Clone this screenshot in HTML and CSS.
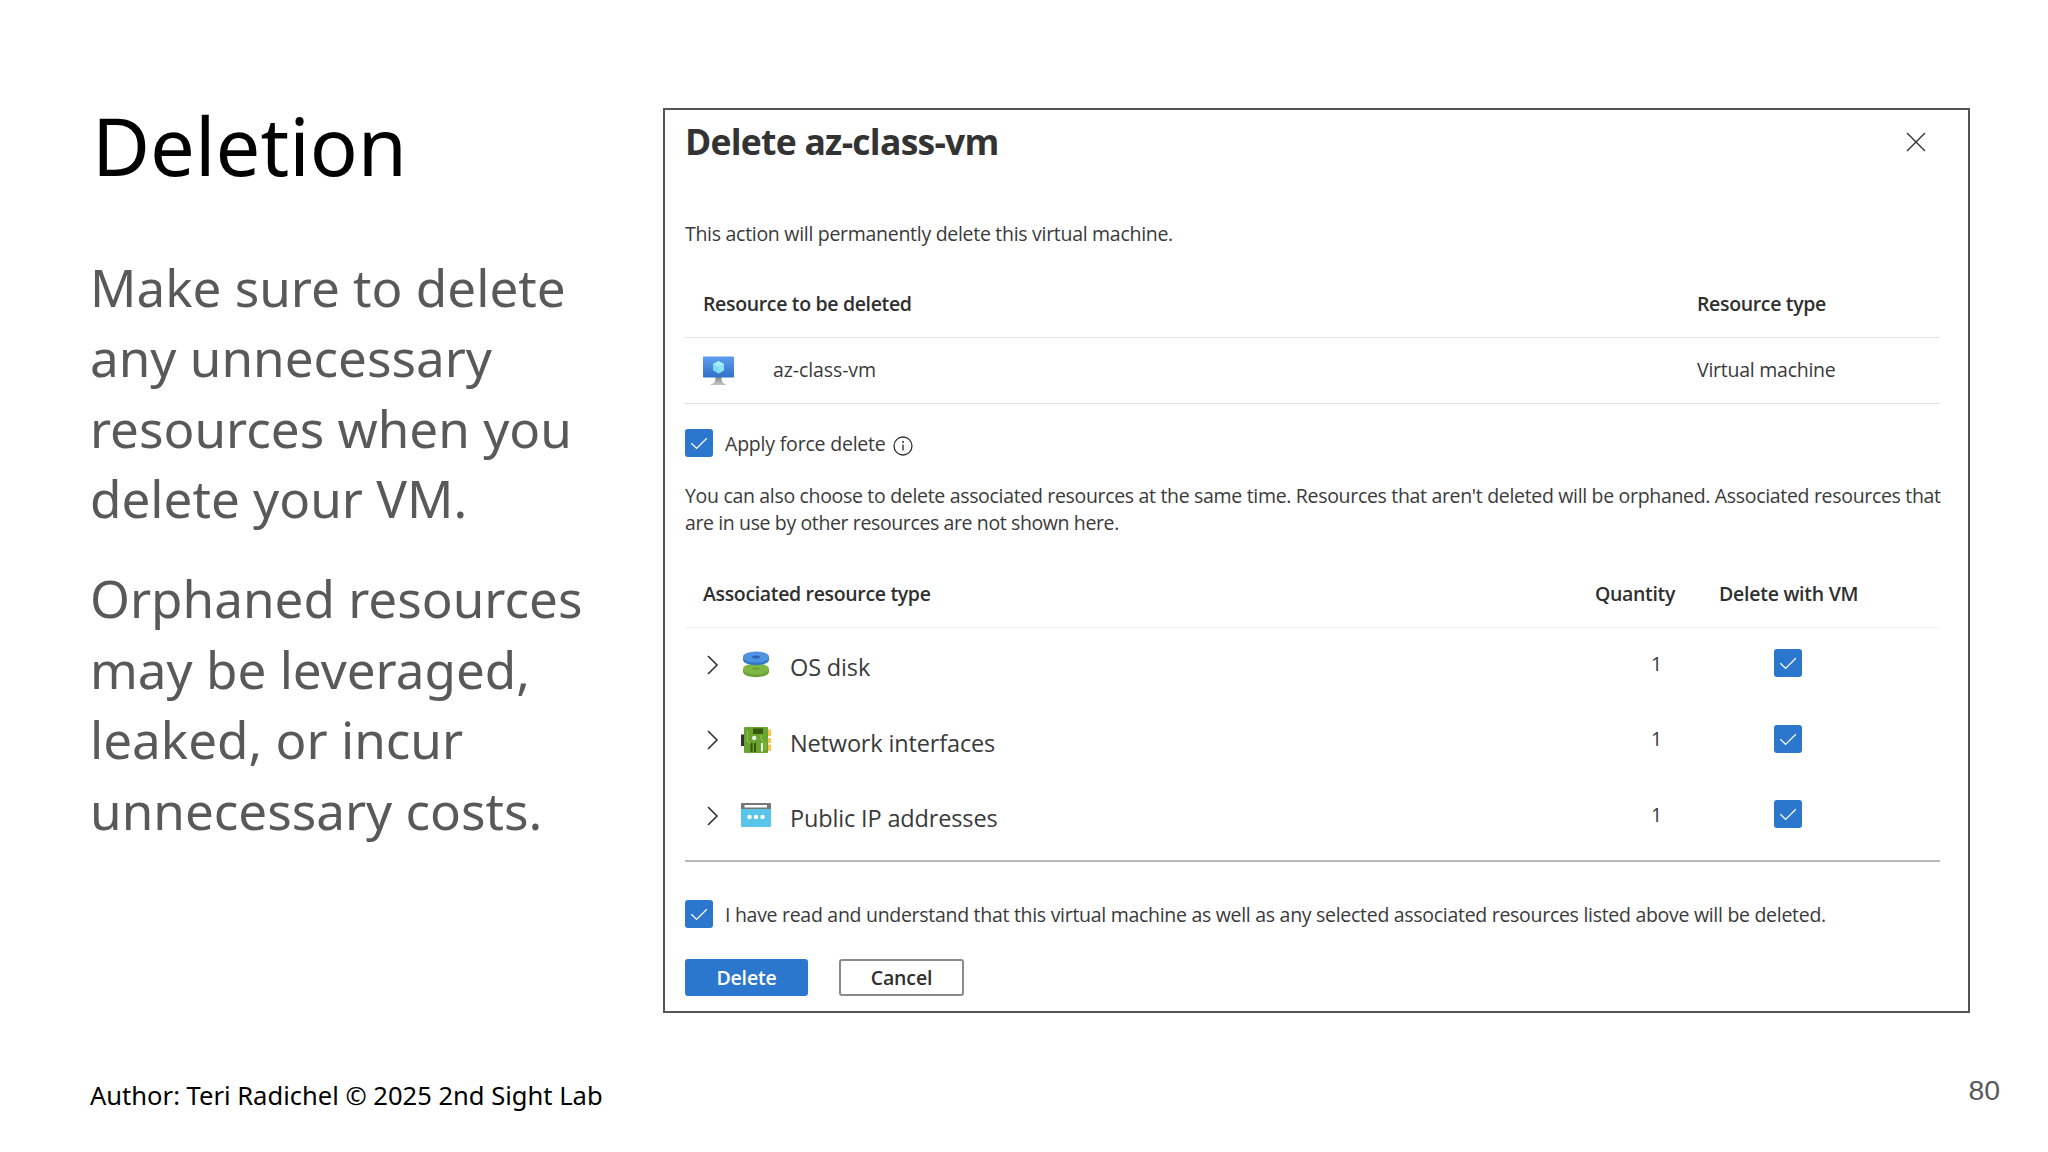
FILE: index.html
```html
<!DOCTYPE html>
<html lang="en">
<head>
  <meta charset="UTF-8">
  <title>Deletion</title>
  <link rel="stylesheet" href="styles.css">
</head>
<body>

  <!-- shared checkmark -->
  <svg class="defs" width="0" height="0">
    <symbol id="check" viewBox="0 0 28 28">
      <path d="M6.3 14.2 L11.6 19.4 L21.8 9.2" fill="none" stroke="#fff" stroke-width="1.3"/>
    </symbol>
    <symbol id="chevron" viewBox="0 0 12 20">
      <path d="M1 1 L10 10 L1 19" fill="none" stroke="#333" stroke-width="1.6"/>
    </symbol>
  </svg>

  <main class="slide">
    <section class="notes">
      <h1>Deletion</h1>
      <p>Make sure to delete<br>any unnecessary<br>resources when you<br>delete your VM.</p>
      <p>Orphaned resources<br>may be leveraged,<br>leaked, or incur<br>unnecessary costs.</p>
    </section>

    <section class="panel">
      <header class="panel-header">
        <h2>Delete az-class-vm</h2>
        <svg class="close" width="20" height="20" viewBox="0 0 20 20">
          <path d="M1 1 L19 19 M19 1 L1 19" fill="none" stroke="#333" stroke-width="1.4"/>
        </svg>
      </header>

      <p class="intro">This action will permanently delete this virtual machine.</p>

      <div class="resources">
        <div class="row head">
          <span class="resource">Resource to be deleted</span>
          <span class="type">Resource type</span>
        </div>
        <div class="row item">
          <span class="resource">
            <svg width="32" height="30" viewBox="0 0 32 30">
              <defs>
                <linearGradient id="screen" x1="0" y1="0" x2="0" y2="1">
                  <stop offset="0" stop-color="#5e9cf0"/>
                  <stop offset="1" stop-color="#2f72c9"/>
                </linearGradient>
                <linearGradient id="stand" x1="0" y1="0" x2="0" y2="1">
                  <stop offset="0" stop-color="#8a8a8a"/>
                  <stop offset="1" stop-color="#c4c4c4"/>
                </linearGradient>
              </defs>
              <path d="M12.5 21 H18.5 C18.5 26 20 28 23 28 V29 H8 V28 C11 28 12.5 26 12.5 21 Z" fill="url(#stand)"/>
              <rect x="0" y="0.5" width="31" height="21" rx="0.8" fill="url(#screen)"/>
              <path d="M15.5 5 L21 8 V14.2 L15.5 17.4 L10 14.2 V8 Z" fill="#7fdcf5"/>
              <path d="M15.5 5 L21 8 L15.5 11.1 L10 8 Z" fill="#a5ecfa"/>
              <path d="M15.5 11.1 L21 8 V14.2 L15.5 17.4 Z" fill="#8ee3f7"/>
            </svg>
            <span class="vm-name">az-class-vm</span>
          </span>
          <span class="type">Virtual machine</span>
        </div>
      </div>

      <div class="option force">
        <span class="checkbox"><svg><use href="#check"/></svg></span>
        <span>Apply force delete</span>
        <svg class="info" width="20" height="20" viewBox="0 0 20 20">
          <circle cx="10" cy="10" r="9" fill="none" stroke="#333" stroke-width="1.3"/>
          <path d="M10 8.6 V14.6" stroke="#333" stroke-width="1.4"/>
          <circle cx="10" cy="6" r="1" fill="#333"/>
        </svg>
      </div>

      <p class="also">You can also choose to delete associated resources at the same time. Resources that aren't deleted will be orphaned. Associated resources that<br><span class="tight">are in use by other resources are not shown here.</span></p>

      <div class="associated">
        <div class="assoc-row assoc-head">
          <span class="name">Associated resource type</span>
          <span class="qty">Quantity</span>
          <span class="with-vm">Delete with VM</span>
        </div>

        <div class="assoc-row">
          <span class="name">
            <svg class="chevron"><use href="#chevron"/></svg>
            <svg class="icon" width="30" height="28" viewBox="0 0 30 28">
              <path d="M2 19 V21.5 C2 29 28 29 28 21.5 V19 Z" fill="#6a9f35"/>
              <ellipse cx="15" cy="19" rx="13" ry="5.6" fill="#80b644"/>
              <ellipse cx="15" cy="18.6" rx="4" ry="1.2" fill="#6a9f35"/>
              <path d="M2 7 V9.5 C2 17 28 17 28 9.5 V7 Z" fill="#3277c8"/>
              <ellipse cx="15" cy="7" rx="13" ry="5.6" fill="#4f92e2"/>
              <ellipse cx="15" cy="6.9" rx="4" ry="1.5" fill="#2b66b0"/>
            </svg>
            <span class="label">OS disk</span>
          </span>
          <span class="qty">1</span>
          <span class="with-vm"><span class="checkbox"><svg><use href="#check"/></svg></span></span>
        </div>

        <div class="assoc-row">
          <span class="name">
            <svg class="chevron"><use href="#chevron"/></svg>
            <svg class="icon" width="30" height="28" viewBox="0 0 30 28">
              <rect x="0" y="8.5" width="4" height="11.5" fill="#333"/>
              <rect x="25" y="3.5" width="5" height="6.5" rx="0.6" fill="#fbc648"/>
              <rect x="25" y="12" width="5" height="5" rx="0.6" fill="#fbc648"/>
              <rect x="25" y="18.5" width="5" height="6.5" rx="0.6" fill="#fbc648"/>
              <rect x="3" y="1" width="24" height="26" rx="1" fill="#6aa32f"/>
              <path d="M6.5 5 V15 L10 19 M20 9 V13 L24 17 V24" fill="none" stroke="#8fcb4c" stroke-width="1"/>
              <rect x="12" y="2.5" width="10" height="5.5" fill="#35590f"/>
              <rect x="9.5" y="17" width="2" height="9" fill="#35590f"/>
              <rect x="13" y="17" width="2" height="9" fill="#35590f"/>
              <rect x="20" y="17" width="2" height="8.5" fill="#eef7e2"/>
              <circle cx="13.2" cy="12" r="2.2" fill="#e8f7ea"/>
            </svg>
            <span class="label">Network interfaces</span>
          </span>
          <span class="qty">1</span>
          <span class="with-vm"><span class="checkbox"><svg><use href="#check"/></svg></span></span>
        </div>

        <div class="assoc-row">
          <span class="name">
            <svg class="chevron"><use href="#chevron"/></svg>
            <svg class="icon" width="30" height="28" viewBox="0 0 30 28">
              <rect x="0" y="2" width="30" height="24" rx="0.8" fill="#59c5ea"/>
              <path d="M0 8 V2.8 Q0 2 0.8 2 H29.2 Q30 2 30 2.8 V8 Z" fill="#777"/>
              <rect x="3.5" y="4" width="22.5" height="2.6" rx="0.5" fill="#fff"/>
              <circle cx="8.5" cy="16" r="2.2" fill="#fff"/>
              <circle cx="15" cy="16" r="2.2" fill="#fff"/>
              <circle cx="21.5" cy="16" r="2.2" fill="#fff"/>
            </svg>
            <span class="label">Public IP addresses</span>
          </span>
          <span class="qty">1</span>
          <span class="with-vm"><span class="checkbox"><svg><use href="#check"/></svg></span></span>
        </div>
      </div>

      <div class="option confirm">
        <span class="checkbox"><svg><use href="#check"/></svg></span>
        <span>I have read and understand that this virtual machine as well as any selected associated resources listed above will be deleted.</span>
      </div>

      <div class="buttons">
        <button class="btn primary">Delete</button>
        <button class="btn">Cancel</button>
      </div>
    </section>
  </main>

  <footer class="footer">
    <span>Author: Teri Radichel © 2025 2nd Sight Lab</span>
    <span class="page">80</span>
  </footer>

</body>
</html>
```
FILE: styles.css
```css
* {
  box-sizing: border-box;
}

body {
  margin: 0;
  height: 1152px;
  background-color: #fff;
  font-family: "Noto Sans", sans-serif;
  overflow: hidden;
}

h1, h2, p {
  margin: 0;
  font-weight: 400;
}

svg {
  display: block;
  flex: none;
}

.defs {
  display: none;
}

/* slide */
.slide {
  display: flex;
  align-items: flex-start;
  height: 1072px;
  padding: 91px 78px 0 90px;
}

.notes {
  width: 573px;
  flex: none;
  white-space: nowrap;
}

.notes h1 {
  margin: 0 0 52.6px 2px;
  font-size: 79.6px;
  line-height: 108px;
  color: #000;
}

.notes p {
  margin-bottom: 29px;
  font-size: 51.2px;
  line-height: 70.6px;
  color: #595959;
}

.footer {
  display: flex;
  justify-content: space-between;
  padding: 0 48px 0 90px;
  font-size: 25.55px;
  line-height: 46px;
  color: #000;
}

.page {
  font-family: "Liberation Sans", Arial, sans-serif;
  font-size: 28.4px;
  line-height: 36px;
  color: #595959;
}

/* delete panel */
.panel {
  width: 1307px;
  height: 905px;
  margin-top: 17px;
  padding: 6px 28px 0 20px;
  border: 2px solid #555;
  font-family: "Open Sans", sans-serif;
  font-size: 19.5px;
  letter-spacing: -0.29px;
  line-height: 27px;
  color: #3a3a3a;
  white-space: nowrap;
}

.panel-header {
  display: flex;
  justify-content: space-between;
  height: 48px;
}

.panel-header h2 {
  font-size: 35.5px;
  font-weight: 700;
  letter-spacing: -0.75px;
  line-height: 50px;
  color: #333;
}

.close {
  margin: 16px 14px 0 0;
}

.intro {
  margin-top: 56px;
}

.resources {
  margin-top: 21px;
}

.row {
  display: flex;
  align-items: center;
  border-bottom: 1px solid #e4e4e4;
}

.row .resource {
  display: flex;
  align-items: center;
  flex: 1;
  padding-left: 18px;
}

.row .type {
  width: 243px;
}

.head, .assoc-head {
  font-weight: 600;
  letter-spacing: -0.34px;
  color: #2f2f2f;
}

.head {
  height: 70px;
  padding-top: 2px;
}

.item {
  height: 66px;
}

.item .type {
  margin-top: -2px;
  letter-spacing: -0.25px;
}

.vm-name {
  margin: -2px 0 0 38px;
  letter-spacing: -0.1px;
}

.option {
  display: flex;
  align-items: center;
  height: 28px;
}

.checkbox {
  display: block;
  width: 28px;
  height: 28px;
  border-radius: 3px;
  background-color: #2b77cd;
  flex: none;
}

.checkbox svg {
  width: 28px;
  height: 28px;
}

.option .checkbox {
  margin-right: 12px;
}

.force {
  margin-top: 25px;
  letter-spacing: -0.2px;
}

.info {
  margin: 5px 0 0 7px;
}

.also {
  margin-top: 25px;
  letter-spacing: -0.32px;
}

.tight {
  letter-spacing: -0.38px;
}

.associated {
  margin-top: 23px;
  padding-bottom: 5px;
  border-bottom: 2px solid #b8b8b8;
}

.assoc-row {
  display: grid;
  grid-template-columns: 892px 116px 170px 1fr;
  height: 75.5px;
  align-items: center;
  padding: 0 0 5px 0;
}

.assoc-head {
  height: 69px;
  padding: 0;
  border-bottom: 1px solid #f1f1f1;
}

.name {
  display: flex;
  align-items: center;
  padding-left: 22px;
}

.assoc-head .name {
  padding-left: 18px;
}

.chevron {
  width: 12px;
  height: 20px;
  margin-top: 3px;
}

.icon {
  margin: 2px 19px 0 22px;
}

.label {
  padding-top: 8px;
  font-size: 23.5px;
  letter-spacing: -0.15px;
  line-height: 32px;
}

.qty {
  padding-left: 74px;
}

.assoc-head .qty {
  padding-left: 18px;
}

.with-vm {
  padding-left: 81px;
}

.assoc-head .with-vm {
  padding-left: 26px;
  letter-spacing: -0.25px;
}

.confirm {
  margin-top: 38px;
}

.confirm span:last-child {
  padding-top: 2px;
}

.buttons {
  display: flex;
  gap: 31px;
  margin-top: 31px;
}

.btn {
  width: 125px;
  height: 37px;
  padding: 0;
  border: 2px solid #8a8a8a;
  border-radius: 3px;
  background-color: #fff;
  font-family: inherit;
  font-size: 19.5px;
  font-weight: 600;
  letter-spacing: -0.15px;
  line-height: 33px;
  color: #2f2f2f;
}

.btn.primary {
  width: 123px;
  border-color: #2b77cd;
  background-color: #2b77cd;
  color: #fff;
}
```
